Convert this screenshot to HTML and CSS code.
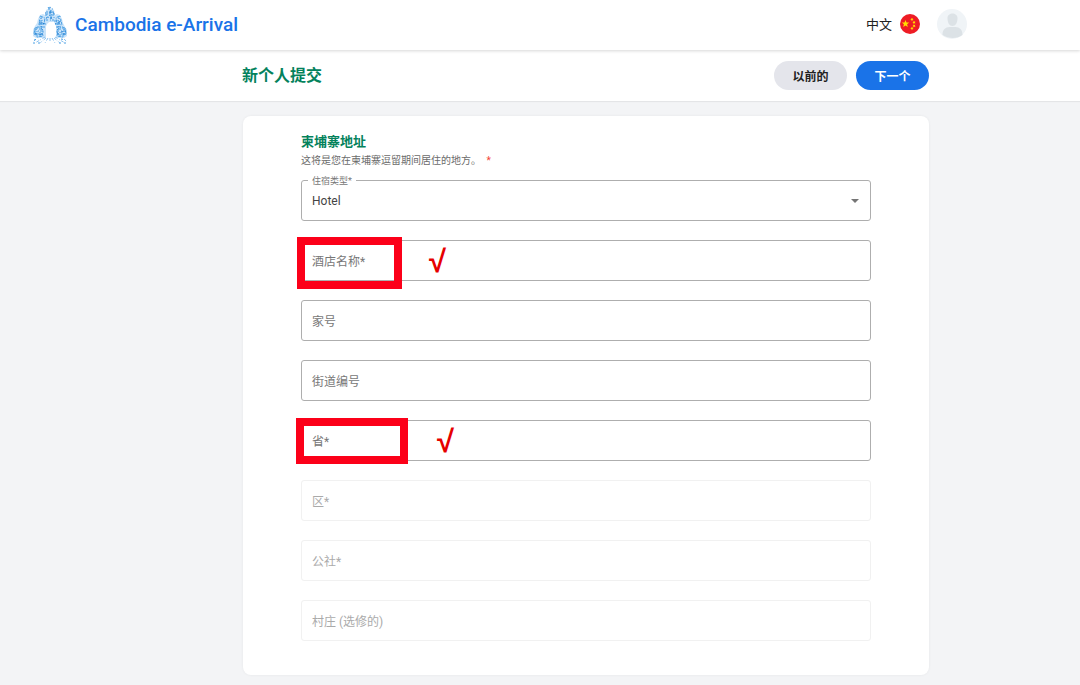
FILE: index.html
```html
<!DOCTYPE html>
<html lang="zh-CN">
<head>
  <meta charset="UTF-8">
  <meta name="viewport" content="width=device-width, initial-scale=1.0">
  <title>Cambodia e-Arrival</title>
  <link rel="stylesheet" href="styles.css">
</head>
<body>
  <header class="header">
    <a class="brand" href="#">
      <svg class="logo" width="34" height="38" viewBox="0 0 34 38" fill="none">
        <path fill="#c9e3f9" d="M17 0l2 3 2 1 1 5 2-1 3 1 2 4 1 4 2 4 2 3v6l-3 2h-8V20l-2-4h-5l-3 4v12H3l-3-2v-6l2-4 2-3 1-4 2-4 3-1 2 1 1-5 2-1 2-3z"/>
        <g stroke="#4a9fe3" stroke-dasharray="2 2 1 1 3 1">
          <path d="M15 3h5M13 6h8M12 9h10M14 11l6 1M13 14h8M15 1l4 6M14 7v6M18 4v9M21 7v6"/>
          <path d="M7 10l5 2-1 6-5 1zM9 10v12M7 15h6M6 18h7M4 21h8M27 10l-4 2 1 6 5 1zM25 10v12M21 15h7M22 18h6M23 21h7"/>
          <path d="M2 22l5-1 3 3v6l-6 1-3-3zM4 21v10M7 22v9M1 25h9M1 28h10M32 22l-5-1-3 3v6l6 1 3-3zM30 21v10M27 22v9M24 25h9M24 28h9"/>
        </g>
        <path stroke="#2280d3" stroke-dasharray="1 3 2 2" d="M17 1v12M8 12v9M26 12v9M3 23v7M9 23v7M31 23v7M25 23v7M13 12h8M12 7h10M6 16l6 2M22 18l6-3M2 27l8 2M24 27l9-2"/>
        <path stroke="#8cc3f0" stroke-dasharray="3 2 1 1" d="M12 31L2 37M13 32l-6 5M15 32l-3 5M17 32v5M19 32l3 5M21 32l6 5M22 31l10 6M3 33l-3 3M31 33l3 3"/>
        <path stroke="#4a9fe3" stroke-dasharray="2 3" d="M0 37h8M26 37h8M1 34l5-1M28 33l5 1"/>
        <path fill="#fff" d="M14 18l3-2 4 2v13h-7z"/>
      </svg>
      <span>Cambodia e-Arrival</span>
    </a>
    <div class="account">
      <button class="language" type="button">
        <span>中文</span>
        <svg width="20" height="20" viewBox="0 0 20 20">
          <circle cx="10" cy="10" r="10" fill="#ee1c25"/>
          <g fill="#ffde00">
            <path d="M5.500 6l1 2.500 2.700.1-2.100 1.700.7 2.600-2.300-1.500-2.300 1.500.7-2.600-2.100-1.700 2.700-.1z"/>
            <path d="M11 4l1 .7 1-.6-.3 1.200.9.8-1.200.1-.5 1.100-.5-1.200-1.200-.1 1-.8z"/>
            <path d="M13.500 7l.8.6 1-.3-.4 1 .6.900h-1.100l-.7.8-.3-1-1-.4.900-.6z"/>
            <path d="M13.500 10.500l.8.6 1-.3-.4 1 .6.900h-1.100l-.7.8-.3-1-1-.4.900-.6z"/>
            <path d="M11 13l1 .7 1-.6-.3 1.200.9.8-1.200.1-.5 1.100-.5-1.200-1.200-.1 1-.8z"/>
          </g>
        </svg>
      </button>
      <button class="avatar" type="button" aria-label="账户">
        <svg width="30" height="30" viewBox="0 0 30 30">
          <circle cx="15" cy="15" r="15" fill="#f0f4f7"/>
          <path fill="#dce2e6" d="M10.500 9c0-6 10-6 10 0 0 5-2 8-5 8s-5-3-5-8zM5.500 26c0-6 3-7.500 7-8h6c4 .5 7 2 7 8-5 4-14 4-20 0z"/>
        </svg>
      </button>
    </div>
  </header>

  <div class="toolbar">
    <h1>新个人提交</h1>
    <div class="actions">
      <button class="btn" type="button">以前的</button>
      <button class="btn btn-primary" type="button">下一个</button>
    </div>
  </div>

  <main class="main">
    <form class="card">
      <div class="intro">
        <h2>柬埔寨地址</h2>
        <p>这将是您在柬埔寨逗留期间居住的地方。 <span class="required">*</span></p>
      </div>

      <div class="field filled">
        <label for="type">住宿类型*</label>
        <select id="type">
          <option>Hotel</option>
        </select>
        <svg class="arrow" width="8" height="4" viewBox="0 0 8 4"><path fill="#757575" d="M0 0h8L4 4z"/></svg>
      </div>
      <div class="field">
        <label for="hotel">酒店名称*</label>
        <input id="hotel" type="text">
        <span class="highlight highlight-hotel"></span>
        <span class="check check-hotel">√</span>
      </div>
      <div class="field">
        <label for="house">家号</label>
        <input id="house" type="text">
      </div>
      <div class="field">
        <label for="street">街道编号</label>
        <input id="street" type="text">
      </div>
      <div class="field">
        <label for="province">省*</label>
        <input id="province" type="text">
        <span class="highlight highlight-province"></span>
        <span class="check check-province">√</span>
      </div>
      <div class="field disabled">
        <label for="district">区*</label>
        <input id="district" type="text" disabled>
      </div>
      <div class="field disabled">
        <label for="commune">公社*</label>
        <input id="commune" type="text" disabled>
      </div>
      <div class="field disabled">
        <label for="village">村庄 (选修的)</label>
        <input id="village" type="text" disabled>
      </div>
    </form>
  </main>
</body>
</html>
```
FILE: styles.css
```css
* {
  box-sizing: border-box;
}

body {
  margin: 0;
  background-color: #f3f4f6;
  color: #212121;
  font-family: Roboto, "Noto Sans CJK SC", sans-serif;
  font-size: 12px;
}

button,
input,
select {
  font: inherit;
  color: inherit;
}

button {
  border: none;
  padding: 0;
  background: none;
  cursor: pointer;
}

h1,
h2,
p {
  margin: 0;
}

.header {
  position: relative;
  display: flex;
  align-items: center;
  justify-content: space-between;
  height: 50px;
  padding: 0 113px 3px 33px;
  background-color: #fff;
  box-shadow: 0 1px 3px rgba(0, 0, 0, 0.16);
}

.brand {
  display: flex;
  align-items: center;
  gap: 8px;
  padding-top: 2px;
  color: #1a73e8;
  font-size: 19px;
  font-weight: 500;
  text-decoration: none;
}

.account {
  display: flex;
  align-items: center;
  gap: 17px;
}

.language {
  display: flex;
  align-items: center;
  gap: 8px;
  font-size: 13px;
}

.avatar {
  height: 30px;
}

.toolbar {
  display: flex;
  align-items: center;
  justify-content: space-between;
  height: 51px;
  padding: 0 151px 0 242px;
  background-color: #fff;
  box-shadow: 0 1px 1px rgba(0, 0, 0, 0.06);
}

.toolbar h1 {
  color: #04825c;
  font-size: 16px;
  font-weight: 700;
  line-height: 24px;
}

.actions {
  display: flex;
  gap: 9px;
}

.btn {
  width: 73px;
  height: 29px;
  border-radius: 15px;
  background-color: #e4e5eb;
  font-weight: 700;
}

.btn-primary {
  background-color: #1a73e8;
  color: #fff;
}

.main {
  padding: 15px 151px 11px 243px;
}

.card {
  display: flex;
  flex-direction: column;
  gap: 19px;
  padding: 16px 58px 34px;
  border-radius: 8px;
  background-color: #fff;
  box-shadow: 0 0 3px rgba(0, 0, 0, 0.06);
}

.intro {
  height: 29px;
}

.intro h2 {
  color: #04825c;
  font-size: 13px;
  font-weight: 700;
  line-height: 20px;
}

.intro p {
  color: #6b6b6b;
  font-size: 10px;
  line-height: 18px;
}

.required {
  margin-left: 3px;
  color: #f44336;
}

.field {
  position: relative;
  height: 41px;
}

.field input,
.field select {
  display: block;
  width: 100%;
  height: 100%;
  padding: 0 10px;
  border: 1px solid #aeaeae;
  border-radius: 3px;
  background-color: transparent;
  color: #444;
  appearance: none;
}

.field label {
  position: absolute;
  top: 12px;
  left: 11px;
  color: #777;
  line-height: 20px;
}

.filled label {
  top: -5px;
  left: 7px;
  padding: 0 4px;
  background-color: #fff;
  font-size: 9px;
  line-height: 12px;
}

.arrow {
  position: absolute;
  top: 19px;
  right: 12px;
}

.disabled input {
  border-color: #f1f1f1;
}

.disabled label {
  color: #aaa;
}

/* red marks over the fields that must be filled in */
.highlight {
  position: absolute;
  border: 8px solid #fc0019;
  pointer-events: none;
}

.highlight-hotel {
  top: -3px;
  left: -4px;
  width: 105px;
  height: 52px;
}

.highlight-province {
  top: -2px;
  left: -5px;
  width: 112px;
  height: 46px;
}

.check {
  position: absolute;
  top: 6px;
  color: #e60000;
  font-family: "Liberation Sans", sans-serif;
  font-size: 31px;
  font-weight: 700;
  line-height: 32px;
}

.check-hotel {
  left: 128px;
}

.check-province {
  left: 136px;
}
```
